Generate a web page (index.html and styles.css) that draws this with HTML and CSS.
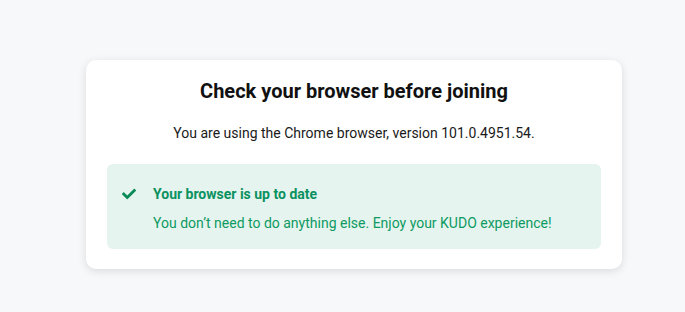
FILE: index.html
```html
<!DOCTYPE html>
<html lang="en">
<head>
  <meta charset="UTF-8" />
  <meta name="viewport" content="width=device-width, initial-scale=1.0" />
  <title>Browser check</title>
  <link rel="stylesheet" href="styles.css">
</head>
<body>
  <div class="page">
    <div class="card">
      <h1>Check your browser before joining</h1>
      <p class="subtitle">You are using the Chrome browser, version 101.0.4951.54.</p>

      <div class="alert">
        <svg class="alert-icon" viewBox="0 0 512 512" aria-hidden="true">
          <path d="M173.898 439.404l-166.4-166.4c-9.997-9.997-9.997-26.206 0-36.204l36.203-36.204c9.997-9.998 26.207-9.998 36.204 0L192 312.69 432.095 72.596c9.997-9.997 26.207-9.997 36.204 0l36.203 36.204c9.997 9.997 9.997 26.206 0 36.204l-294.4 294.401c-9.998 9.997-26.207 9.997-36.204-.001z"/>
        </svg>
        <div class="alert-text">
          <p class="alert-title">Your browser is up to date</p>
          <p class="alert-body">You don’t need to do anything else. Enjoy your KUDO experience!</p>
        </div>
      </div>
    </div>
  </div>
</body>
</html>
```
FILE: styles.css
```css
* {
  margin: 0;
  padding: 0;
  box-sizing: border-box;
  font-family: Roboto, 'Liberation Sans', sans-serif;
}

body {
  background: #f7f8fa;
  color: #111;
  min-height: 100vh;
}

.page {
  display: flex;
  justify-content: center;
  padding: 60px 0 0 23px;
}

.card {
  width: 536px;
  background: #fff;
  border-radius: 10px;
  box-shadow: 0 2px 8px rgba(0, 0, 0, 0.12);
  padding: 19px 21px 20px;
  text-align: center;
}

h1 {
  font-size: 20px;
  font-weight: 700;
  line-height: 24px;
  color: #111;
}

.subtitle {
  margin-top: 20px;
  font-size: 14px;
  line-height: 20px;
  color: #1a1a1a;
}

.alert {
  margin-top: 21px;
  display: flex;
  align-items: flex-start;
  gap: 17px;
  background: #e5f4ee;
  border-radius: 6px;
  padding: 20px 15px 16px;
  text-align: left;
  color: #0c9a62;
}

.alert-icon {
  width: 14px;
  height: 14px;
  margin-top: 3px;
  fill: #0a8a58;
  flex-shrink: 0;
}

.alert-title {
  font-size: 14px;
  font-weight: 700;
  line-height: 20px;
  color: #0a9160;
}

.alert-body {
  margin-top: 9px;
  font-size: 14px;
  line-height: 20px;
}
```
